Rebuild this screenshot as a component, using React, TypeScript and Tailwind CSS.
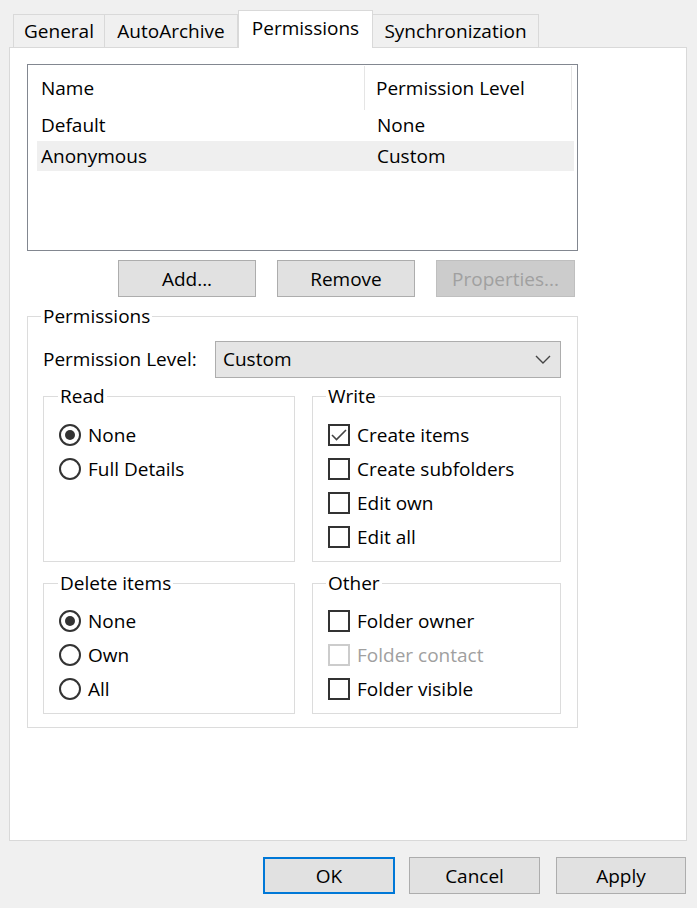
import React from 'react';

const FONT = { fontFamily: '"Open Sans", "Noto Sans", "Liberation Sans", sans-serif' };

function Tab({ label, width, active }: { label: string; width: string; active?: boolean }) {
  if (active) {
    return (
      <div className={`${width} h-[38px] -mb-px relative z-10 flex items-center justify-center bg-white border border-b-0 border-[#d9d9d9] pb-[3px]`}>
        {label}
      </div>
    );
  }
  return (
    <div className={`${width} h-[33px] flex items-center justify-center bg-[#f0f0f0] border-t border-r border-[#d9d9d9] first:border-l pt-[1px]`}>
      {label}
    </div>
  );
}

function GroupBox({ label, className, labelLeft, children }: { label: string; className: string; labelLeft: string; children: React.ReactNode }) {
  return (
    <div className={`relative border border-[#dcdcdc] ${className}`}>
      <span className={`absolute ${labelLeft} -top-[14px] bg-white px-[2px] leading-[26px]`}>{label}</span>
      {children}
    </div>
  );
}

function Radio({ label, checked }: { label: string; checked?: boolean }) {
  return (
    <div className="h-[34px] flex items-center">
      <span className="w-[22px] h-[22px] rounded-full border-2 border-[#333] flex items-center justify-center">
        {checked && <span className="w-[10px] h-[10px] rounded-full bg-[#333]" />}
      </span>
      <span className="ml-[7px]">{label}</span>
    </div>
  );
}

function Check({ label, checked, disabled }: { label: string; checked?: boolean; disabled?: boolean }) {
  return (
    <div className="h-[34px] flex items-center">
      <span className={`w-[22px] h-[22px] border-2 flex items-center justify-center ${disabled ? 'border-[#cccccc]' : 'border-[#333]'}`}>
        {checked && (
          <svg width="16" height="12" viewBox="0 0 16 12">
            <path d="M1 6l4.5 4.5L15 1" fill="none" stroke="#444" strokeWidth="1.6" />
          </svg>
        )}
      </span>
      <span className={`ml-[7px] ${disabled ? 'text-[#a0a0a0]' : ''}`}>{label}</span>
    </div>
  );
}

function Button({ label, className, disabled, primary }: { label: string; className: string; disabled?: boolean; primary?: boolean }) {
  const look = disabled
    ? 'bg-[#cccccc] border border-[#bfbfbf] text-[#a0a0a0]'
    : primary
    ? 'bg-[#e1e1e1] border-2 border-[#0078d7]'
    : 'bg-[#e1e1e1] border border-[#adadad]';
  return <div className={`h-[37px] flex items-center justify-center pt-[2px] ${look} ${className}`}>{label}</div>;
}

export default function App() {
  return (
    <div className="w-[697px] h-[908px] bg-[#f0f0f0] text-black text-[19px] leading-none overflow-hidden" style={FONT}>
      {/* tab strip */}
      <div className="h-[47px] flex items-end pl-[13px]">
        <Tab label="General" width="w-[92px]" />
        <Tab label="AutoArchive" width="w-[133px]" />
        <Tab label="Permissions" width="w-[135px]" active />
        <Tab label="Synchronization" width="w-[166px]" />
      </div>

      {/* page */}
      <div className="ml-[9px] w-[678px] h-[794px] bg-white border border-[#d9d9d9] pt-[16px] pl-[17px]">
        {/* list view */}
        <div className="w-[551px] h-[187px] border border-[#828790] pl-[9px] pr-[3px]">
          <div className="h-[45px] flex">
            <div className="w-[328px] flex items-center pl-[4px] border-r border-[#e5e5e5] mt-[1px]">Name</div>
            <div className="w-[207px] flex items-center pl-[11px] border-r border-[#e5e5e5] mt-[1px]">Permission Level</div>
          </div>
          <div className="h-[31px] flex items-center">
            <div className="w-[329px] pl-[4px]">Default</div>
            <div className="pl-[11px]">None</div>
          </div>
          <div className="h-[30px] flex items-center bg-[#efefef]">
            <div className="w-[329px] pl-[4px]">Anonymous</div>
            <div className="pl-[11px]">Custom</div>
          </div>
        </div>

        <div className="flex mt-[9px] ml-[91px] gap-[21px]">
          <Button label="Add..." className="w-[138px]" />
          <Button label="Remove" className="w-[138px]" />
          <Button label="Properties..." className="w-[139px]" disabled />
        </div>

        <GroupBox label="Permissions" labelLeft="left-[13px]" className="mt-[19px] w-[551px] h-[412px] pl-[15px] pt-[24px]">
          <div className="flex items-center h-[37px]">
            <div className="w-[172px]">Permission Level:</div>
            <div className="w-[346px] h-[37px] bg-[#e5e5e5] border border-[#adadad] flex items-center justify-between pl-[7px] pr-[9px]">
              <span>Custom</span>
              <svg width="16" height="9" viewBox="0 0 16 9">
                <path d="M1 1l7 7 7-7" fill="none" stroke="#444" strokeWidth="1.4" />
              </svg>
            </div>
          </div>

          <div className="grid grid-cols-[252px_249px] gap-x-[17px] gap-y-[21px] mt-[18px]">
            <GroupBox label="Read" labelLeft="left-[14px]" className="h-[166px] pl-[15px] pt-[21px]">
              <Radio label="None" checked />
              <Radio label="Full Details" />
            </GroupBox>
            <GroupBox label="Write" labelLeft="left-[13px]" className="h-[166px] pl-[15px] pt-[21px]">
              <Check label="Create items" checked />
              <Check label="Create subfolders" />
              <Check label="Edit own" />
              <Check label="Edit all" />
            </GroupBox>
            <GroupBox label="Delete items" labelLeft="left-[14px]" className="h-[131px] pl-[15px] pt-[20px]">
              <Radio label="None" checked />
              <Radio label="Own" />
              <Radio label="All" />
            </GroupBox>
            <GroupBox label="Other" labelLeft="left-[13px]" className="h-[131px] pl-[15px] pt-[20px]">
              <Check label="Folder owner" />
              <Check label="Folder contact" disabled />
              <Check label="Folder visible" />
            </GroupBox>
          </div>
        </GroupBox>
      </div>

      {/* dialog buttons */}
      <div className="flex justify-end pr-[11px] mt-[16px]">
        <Button label="OK" className="w-[132px]" primary />
        <Button label="Cancel" className="w-[131px] ml-[14px]" />
        <Button label="Apply" className="w-[130px] ml-[16px]" />
      </div>
    </div>
  );
}
